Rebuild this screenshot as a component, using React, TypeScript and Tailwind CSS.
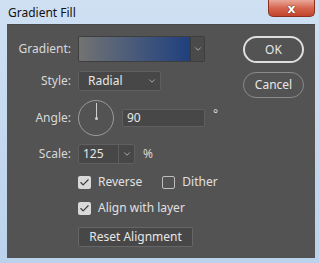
import { Check, ChevronDown } from 'lucide-react';

const font = { fontFamily: '"Noto Sans", "Open Sans", sans-serif' };

function Label({ children }: { children: string }) {
  return <div className="w-[65px] shrink-0 text-right text-[12px] text-[#d8d8d8] pr-[1px]">{children}</div>;
}

function CheckBox({ checked }: { checked: boolean }) {
  return checked ? (
    <div className="w-[13px] h-[13px] rounded-[2px] bg-[#d9d9d9] flex items-center justify-center">
      <Check size={11} strokeWidth={2.5} className="text-[#3a3a3a]" />
    </div>
  ) : (
    <div className="w-[13px] h-[13px] rounded-[2px] border border-[#bdbdbd]" />
  );
}

export default function App() {
  return (
    <div className="w-[319px] h-[263px] flex flex-col bg-gradient-to-b from-[#cfe0f3] to-[#bad2ec] overflow-hidden select-none" style={font}>
      {/* title bar */}
      <div className="h-[24px] flex items-start shrink-0">
        <div className="pl-[8px] pt-[4px] text-[12px] text-[#111]">Gradient Fill</div>
        <div className="ml-auto mr-[4px] w-[47px] h-[17px] rounded-b-[5px] border border-t-0 border-[#8e3021] bg-gradient-to-b from-[#e9a79a] via-[#d5664f] to-[#c2442c] flex items-center justify-center">
          <span className="text-white text-[13px] font-bold leading-none" style={{ fontFamily: '"DejaVu Sans", sans-serif', textShadow: '0 0 1px #5a1a10, 0 0 1px #5a1a10' }}>x</span>
        </div>
      </div>

      {/* body */}
      <div className="flex-1 ml-[7px] mr-[4px] mb-[5px] bg-[#535353] border-t border-[#4a4a4a] flex pt-[11px]">
        <div className="flex-1 flex flex-col">
          {/* Gradient */}
          <div className="flex items-center gap-[6px] h-[26px]">
            <Label>Gradient:</Label>
            <div className="w-[127px] h-[26px] flex border border-[#3e3e3e] rounded-[2px] overflow-hidden">
              <div className="flex-1 bg-gradient-to-r from-[#727272] to-[#1f3f7e]" />
              <div className="w-[14px] bg-[#4a4a4a] border-l border-[#3a3a3a] flex items-center justify-center">
                <ChevronDown size={10} className="text-[#bdbdbd]" />
              </div>
            </div>
          </div>

          {/* Style */}
          <div className="flex items-center gap-[6px] h-[20px] mt-[9px]">
            <Label>Style:</Label>
            <div className="w-[83px] h-[20px] flex items-center bg-[#474747] border border-[#5f5f5f] rounded-[2px] pl-[9px] pr-[3px]">
              <span className="text-[12px] text-[#e6e6e6] flex-1">Radial</span>
              <ChevronDown size={10} className="text-[#bdbdbd]" />
            </div>
          </div>

          {/* Angle */}
          <div className="flex items-center gap-[6px] h-[36px] mt-[9px]">
            <Label>Angle:</Label>
            <div className="w-[36px] h-[36px] rounded-full border border-[#9c9c9c] flex flex-col items-center">
              <div className="w-px h-[15px] bg-[#cfcfcf] mt-[2px]" />
              <div className="w-[3px] h-[3px] rounded-full bg-[#cfcfcf] -mt-[1px]" />
            </div>
            <div className="ml-[2px] w-[83px] h-[18px] bg-[#474747] border border-[#5f5f5f] rounded-[2px] flex items-center pl-[4px] text-[12px] text-[#e6e6e6]">90</div>
            <span className="text-[12px] text-[#d8d8d8] self-start mt-[5px] ml-[2px]">°</span>
          </div>

          {/* Scale */}
          <div className="flex items-center gap-[6px] h-[20px] mt-[8px]">
            <Label>Scale:</Label>
            <div className="w-[57px] h-[20px] flex bg-[#474747] border border-[#5f5f5f] rounded-[2px]">
              <span className="flex-1 pl-[4px] text-[12px] text-[#e6e6e6] leading-[18px]">125</span>
              <div className="w-[16px] border-l border-[#5f5f5f] flex items-center justify-center">
                <ChevronDown size={10} className="text-[#bdbdbd]" />
              </div>
            </div>
            <span className="text-[12px] text-[#d8d8d8] ml-[2px]">%</span>
          </div>

          {/* Reverse / Dither */}
          <div className="flex items-center h-[14px] mt-[11px] ml-[71px]">
            <CheckBox checked />
            <span className="ml-[7px] text-[12px] text-[#e0e0e0]">Reverse</span>
            <div className="ml-[20px] flex"><CheckBox checked={false} /></div>
            <span className="ml-[7px] text-[12px] text-[#e0e0e0]">Dither</span>
          </div>

          {/* Align */}
          <div className="flex items-center h-[14px] mt-[12px] ml-[71px]">
            <CheckBox checked />
            <span className="ml-[7px] text-[12px] text-[#e0e0e0]">Align with layer</span>
          </div>

          {/* Reset */}
          <div className="flex mt-[12px] ml-[71px]">
            <button className="w-[115px] h-[20px] bg-[#474747] border border-[#666] rounded-[2px] text-[12px] text-[#e6e6e6] leading-none">Reset Alignment</button>
          </div>
        </div>

        {/* buttons */}
        <div className="flex flex-col gap-[9px] mr-[11px]">
          <button className="w-[61px] h-[27px] rounded-full border-2 border-[#dedede] text-[12px] text-[#e6e6e6]">OK</button>
          <button className="w-[61px] h-[26px] rounded-full border border-[#8a8a8a] text-[12px] text-[#e6e6e6]">Cancel</button>
        </div>
      </div>
    </div>
  );
}
